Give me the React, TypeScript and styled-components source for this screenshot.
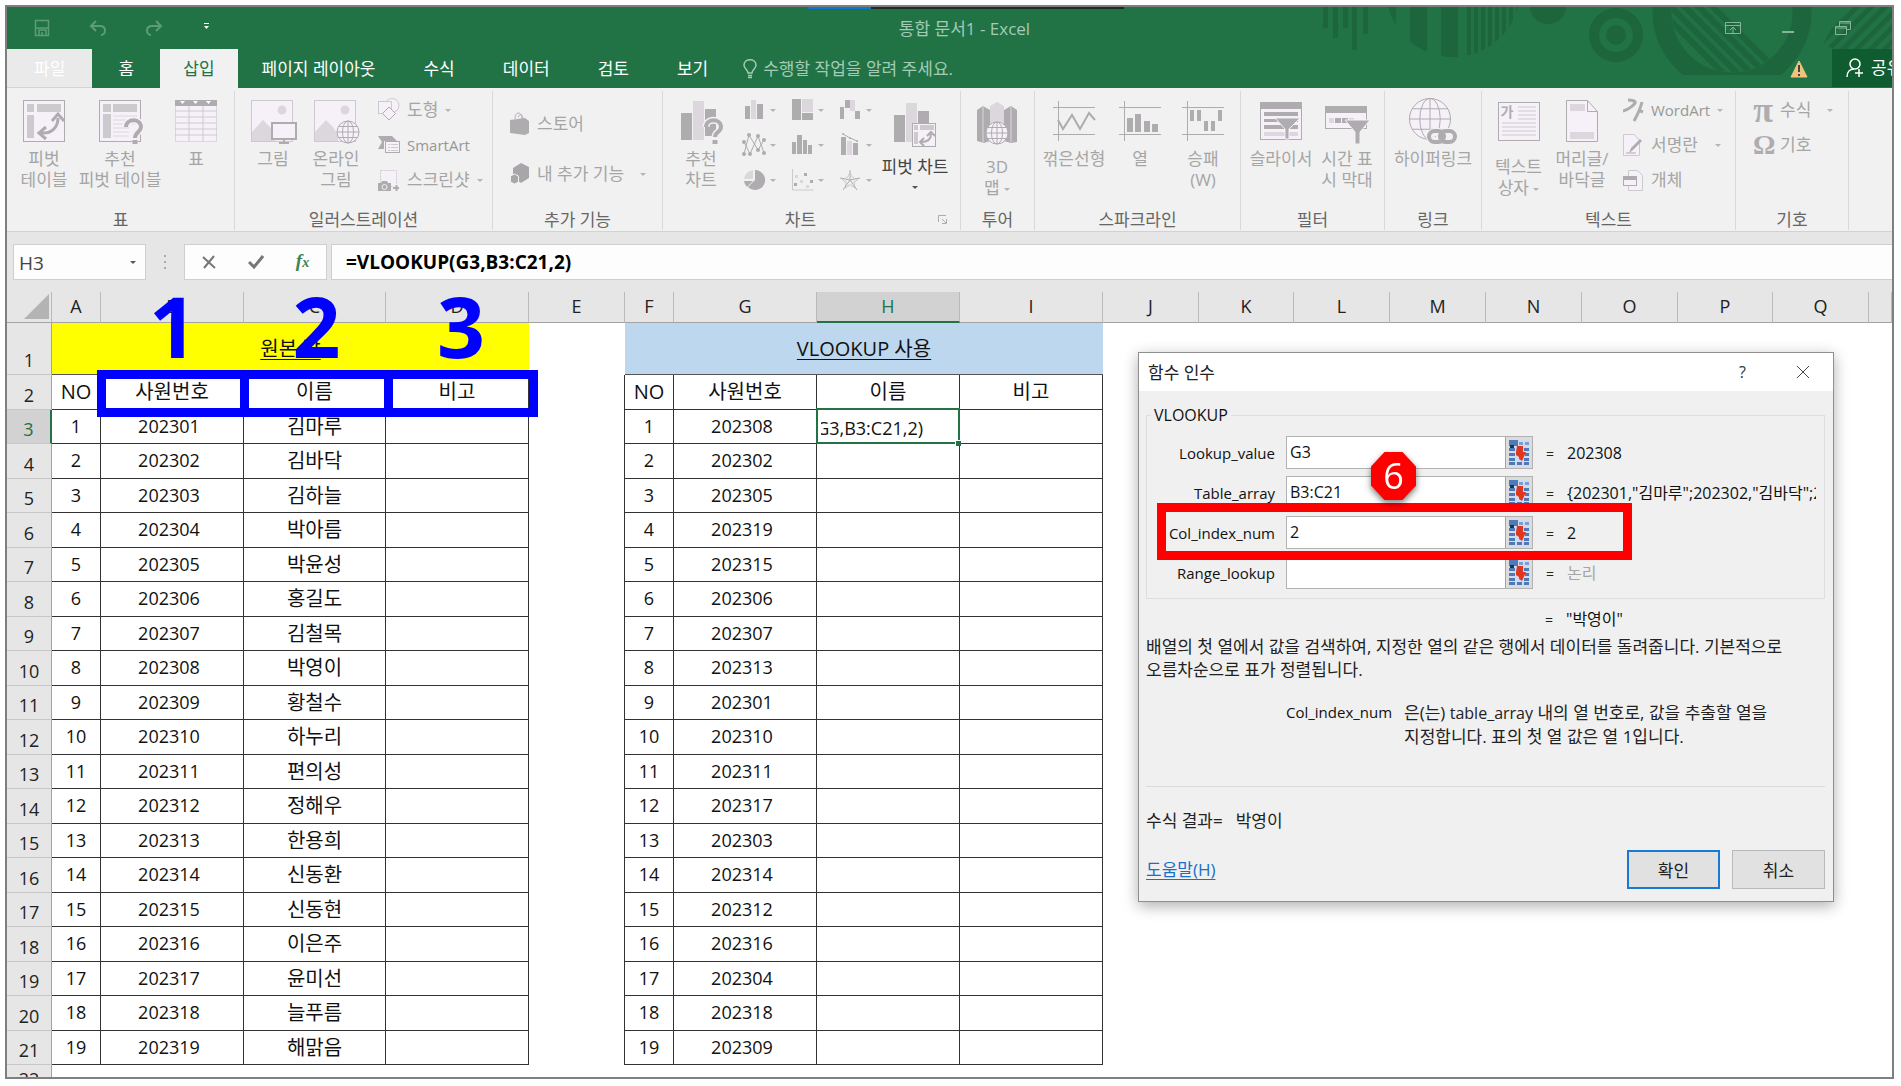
import React from 'react';
import styled, { createGlobalStyle, css } from 'styled-components';

const GREEN = '#217346';
const PATTERN = '#1d653d';
const PALE = '#a3cbb5';
const INK = '#afacb0';
const MID = '#cdcace';
const SOFT = '#dbd7dc';
const PAPER = '#f6f1f8';
const FONT = '"Open Sans", "Noto Sans CJK KR", sans-serif';

const Global = createGlobalStyle`
  *, *::before, *::after { box-sizing: border-box; }
  body { margin: 0; background: #fff; font-family: ${FONT}; color: #111; overflow: hidden; }
  button, input { font-family: inherit; margin: 0; padding: 0; border: 0; border-radius: 0; background: none; color: inherit; outline: none; }
  svg { display: block; flex: none; }
`;

const Page = styled.main`
  padding: 5px 7px 7px 5px;
  height: 100vh;
`;

const Frame = styled.div`
  position: relative;
  display: flex;
  flex-direction: column;
  height: 100%;
  border: 2px solid #7f7f7f;
  background: #e6e6e6;
  overflow: hidden;
`;

/* ---------- title bar and tabs ---------- */

const Header = styled.header`
  position: relative;
  background: ${GREEN};
  height: 81px;
  flex: none;
`;

const Pattern = styled.svg`
  position: absolute;
  top: 0;
  right: 0;
`;

const ScreenStrip = styled.div`
  position: absolute;
  top: 0;
  left: 801px;
  width: 316px;
  height: 2px;
  background: linear-gradient(90deg, #0f77c9 63px, #1d2a26 63px);
`;

const TitleBar = styled.div`
  position: relative;
  display: grid;
  grid-template-columns: 1fr auto 1fr;
  align-items: center;
  height: 42px;
`;

const QuickAccess = styled.div`
  display: flex;
  align-items: center;
  gap: 38px;
  padding-left: 26px;
  color: #5c9c79;
`;

const PlainButton = styled.button`
  display: flex;
  align-items: center;
  justify-content: center;
`;

const DocTitle = styled.h1`
  margin: 0 0 0 30px;
  padding-top: 1px;
  font-size: 17px;
  line-height: 22px;
  font-weight: 400;
  color: ${PALE};
`;

const WindowControls = styled.div`
  display: flex;
  justify-content: flex-end;
  align-items: center;
  gap: 41px;
  color: #86b49a;
  margin-right: -14px;
`;

const TabRow = styled.nav`
  position: relative;
  display: flex;
  height: 39px;
`;

const Tab = styled.button<{ $kind?: 'file' | 'active' }>`
  min-width: 68px;
  padding: 0 24px;
  font-size: 17px;
  line-height: 37px;
  color: #fff;
  ${(p) => p.$kind === 'file' && css`
    padding: 0 27px;
    background: #eaeaea;
    border-bottom: 1px solid #d4d4d4;
    color: #fff;
  `}
  ${(p) => p.$kind === 'active' && css`
    padding: 0 23px;
    background: #f1f1f1;
    color: ${GREEN};
  `}
`;

const TellMe = styled.button`
  display: flex;
  align-items: center;
  gap: 6px;
  margin-left: 11px;
  font-size: 17px;
  line-height: 37px;
  color: ${PALE};
`;

const TabEnd = styled.div`
  display: flex;
  align-items: center;
  gap: 24px;
  margin-left: auto;
`;

const Share = styled.button`
  display: flex;
  align-items: center;
  gap: 8px;
  width: 60px;
  height: 38px;
  padding-left: 14px;
  background: #0e5c2f;
  color: #fff;
  font-size: 17px;
  line-height: 20px;
  white-space: nowrap;
  overflow: hidden;
  align-self: flex-start;
`;

/* ---------- ribbon ---------- */

const Ribbon = styled.section`
  display: flex;
  flex: none;
  height: 144px;
  padding: 3px 0 1px;
  background: #f1f1f1;
  border-bottom: 1px solid #d2d2d2;
`;

const Group = styled.div<{ $w: number }>`
  display: flex;
  flex-direction: column;
  flex: none;
  width: ${(p) => p.$w}px;
  border-right: 1px solid #d8d8d8;
`;

const GroupBody = styled.div<{ $pad?: number }>`
  display: flex;
  flex: 1;
  padding-left: ${(p) => p.$pad ?? 0}px;
`;

const GroupName = styled.div<{ $launcher?: boolean }>`
  display: flex;
  align-items: center;
  height: 20px;
  padding-right: ${(p) => (p.$launcher ? 12 : 0)}px;
  font-size: 17px;
  line-height: 20px;
  color: #666;
  white-space: nowrap;

  & > span { flex: 1; text-align: center; }
`;

const Big = styled.button<{ $w: number; $dark?: boolean; $low?: boolean }>`
  display: flex;
  flex-direction: column;
  align-items: center;
  flex: none;
  width: ${(p) => p.$w}px;
  padding-top: ${(p) => (p.$low ? 10 : 7)}px;
  gap: ${(p) => (p.$low ? 9 : 4)}px;
  font-size: 17px;
  line-height: 21px;
  white-space: nowrap;
  color: ${(p) => (p.$dark ? '#444' : '#a5a5a5')};
`;

const Lines = styled.span`
  display: flex;
  flex-direction: column;
  align-items: center;
`;

const SmallColumn = styled.div<{ $gap?: number; $top?: number }>`
  display: flex;
  flex-direction: column;
  align-items: flex-start;
  gap: ${(p) => p.$gap ?? 11}px;
  padding-top: ${(p) => p.$top ?? 7}px;
`;

const Small = styled.button<{ $latin?: boolean; $gap?: number }>`
  display: flex;
  align-items: center;
  gap: 7px;
  height: 24px;
  font-size: ${(p) => (p.$latin ? 15 : 17)}px;
  line-height: 24px;
  white-space: nowrap;
  color: ${(p) => (p.$latin ? '#979797' : '#a5a5a5')};

  & > i { margin-left: ${(p) => p.$gap ?? 0}px; }
`;

const Caret = styled.i<{ $dark?: boolean }>`
  display: inline-block;
  flex: none;
  width: 0;
  height: 0;
  vertical-align: middle;
  border: 3px solid transparent;
  border-bottom-width: 0;
  border-top-color: ${(p) => (p.$dark ? '#555' : '#b5b5b5')};
`;

const ChartGrid = styled.div`
  display: grid;
  grid-template-columns: repeat(3, 48px);
  grid-auto-rows: 24px;
  row-gap: 11px;
  padding-top: 7px;
  margin-left: 6px;
`;

const ChartKind = styled.button`
  display: flex;
  align-items: center;
  gap: 4px;
`;

/* ---------- formula bar ---------- */

const FormulaBar = styled.section`
  display: flex;
  flex: none;
  align-items: stretch;
  height: 60px;
  padding: 12px 0 12px 6px;
`;

const NameBox = styled.div`
  display: flex;
  align-items: center;
  width: 133px;
  padding: 0 9px 0 5px;
  border: 1px solid #cfcfcf;
  background: #fdfdfd;
  color: #444;

  input { flex: 1; min-width: 0; font-size: 19px; padding-top: 2px; }
`;

const Dots = styled.div`
  display: flex;
  flex-direction: column;
  justify-content: center;
  gap: 4px;
  width: 38px;
  align-items: center;

  span { width: 2px; height: 2px; background: #aaa; }
`;

const FormulaButtons = styled.div`
  display: grid;
  grid-template-columns: repeat(3, 1fr);
  width: 143px;
  border: 1px solid #cfcfcf;
  background: #fdfdfd;
`;

const FormulaInput = styled.input`
  && {
    flex: 1;
    min-width: 0;
    margin-left: 4px;
    padding-left: 14px;
    border: 1px solid #cfcfcf;
    border-right: 0;
    background: #fdfdfd;
    font-size: 19px;
    font-weight: 700;
    color: #000;
  }
`;

/* ---------- sheet ---------- */

const Sheet = styled.section`
  position: relative;
  flex: 1;
  min-height: 0;
  overflow: hidden;
  background: #fff;
`;

const Grid = styled.table`
  width: 100%;
  table-layout: fixed;
  border-collapse: separate;
  border-spacing: 0;
  font-size: 18px;
  line-height: 24px;

  th, td { padding: 0 0 2px; font-weight: 400; text-align: center; overflow: hidden; white-space: nowrap; }
`;

const ColHead = styled.th<{ $on?: boolean }>`
  height: 31px;
  background: ${(p) => (p.$on ? '#d2d2d2' : '#e6e6e6')};
  color: ${(p) => (p.$on ? GREEN : '#222')};
  border-right: 1px solid #bababa;
  border-bottom: ${(p) => (p.$on ? `2px solid ${GREEN}` : '1px solid #a3a3a3')};
`;

const Corner = styled(ColHead)`
  svg { margin-left: 17px; }
`;

const Row = styled.tr<{ $h: number }>`
  height: ${(p) => p.$h}px;
`;

const RowHead = styled.th<{ $on?: boolean }>`
  vertical-align: bottom;
  background: ${(p) => (p.$on ? '#d2d2d2' : '#e6e6e6')};
  color: ${(p) => (p.$on ? GREEN : '#222')};
  border-right: ${(p) => (p.$on ? `2px solid ${GREEN}` : '1px solid #a3a3a3')};
  border-bottom: 1px solid #c8c8c8;
`;

const Cell = styled.td<{ $text?: boolean; $number?: boolean }>`
  && { padding: 0 ${(p) => (p.$number ? 6 : 0)}px ${(p) => (p.$text ? 0 : 2)}px 0; }
  font-size: ${(p) => (p.$text ? 20 : 18)}px;
  border-right: 1px solid #333;
  border-bottom: 1px solid #333;
`;

const GapCell = styled.td<{ $edge?: boolean }>`
  border-right: ${(p) => (p.$edge ? '1px solid #333' : '0')};
`;

const Banner = styled.td<{ $bg: string }>`
  && { padding: 0; }
  background: ${(p) => p.$bg};
  border-bottom: 1px solid #555;
  font-size: 20px;
  text-decoration: underline;
  text-underline-offset: 3px;
  text-decoration-thickness: 1px;
`;

const EditingCell = styled.td`
  && { overflow: visible; }
  position: relative;
  border-right: 1px solid #333;
  border-bottom: 1px solid #333;

  &::before {
    content: '';
    position: absolute;
    inset: -2px -1px -1px -1px;
    border: 2px solid ${GREEN};
  }

  &::after {
    content: '';
    position: absolute;
    right: -2px;
    bottom: -3px;
    width: 6px;
    height: 6px;
    background: ${GREEN};
    border: 1px solid #fff;
    border-width: 1px 0 0 1px;
  }
`;

const EditingText = styled.div`
  display: flex;
  justify-content: flex-end;
  width: 102px;
  margin-left: 4px;
  padding-top: 4px;
  overflow: hidden;
`;

const HeaderMarks = styled.div`
  position: absolute;
  top: 78px;
  left: 90px;
  display: grid;
  grid-template-columns: 152px 144px 145px;
  height: 47px;
`;

const HeaderMark = styled.div`
  position: relative;
  display: flex;
  justify-content: center;
  border: 9px solid #00f;

  & + & { border-left: 0; }
`;

const MarkNumber = styled.strong`
  position: absolute;
  bottom: 40px;
  font-size: 84px;
  line-height: 84px;
  font-weight: 700;
  color: #00f;
`;

/* ---------- dialog ---------- */

const Dialog = styled.section`
  position: absolute;
  top: 345px;
  left: 1131px;
  width: 696px;
  border: 1px solid #8f8f8f;
  background: #f0f0f0;
  box-shadow: 0 4px 14px rgba(0, 0, 0, 0.32);
  font-size: 17px;
  line-height: 23px;
  color: #222;
`;

const DialogTitle = styled.div`
  display: flex;
  align-items: center;
  height: 38px;
  padding: 0 23px 0 9px;
  background: #fff;

  h2 { flex: 1; margin: 0; font-size: 17px; font-weight: 400; }
`;

const HelpMark = styled.button`
  margin-right: 50px;
  font-size: 16px;
  color: #333;
`;

const DialogBody = styled.div`
  padding: 13px 8px 12px 7px;
`;

const ArgBox = styled.fieldset`
  margin: 0;
  padding: 10px 8px 9px 0;
  min-width: 0;
  border: 1px solid #dedede;

  legend { margin-left: 4px; padding: 0 3px; font-size: 16px; line-height: 22px; color: #111; }
`;

const ArgRow = styled.div`
  display: grid;
  grid-template-columns: 139px 247px 34px 1fr;
  align-items: center;
  height: 33px;

  label { padding: 2px 11px 0 0; text-align: right; font-size: 15px; color: #111; }
`;

const ArgField = styled.div`
  display: flex;
  height: 33px;
  border: 1px solid #b2b2b2;
  background: #fff;

  input { flex: 1; min-width: 0; padding: 0 0 2px 3px; font-size: 16px; color: #111; }
`;

const ArgFields = styled.div`
  display: flex;
  flex-direction: column;
  gap: 7px;
`;

const RefButton = styled.button`
  && {
    display: flex;
    align-items: center;
    justify-content: center;
    width: 27px;
    background: #dcdcdc;
    border-left: 1px solid #a5a5a5;
  }
`;

const Equals = styled.span`
  padding: 2px 0 0 13px;
  font-size: 14px;
`;

const ArgValue = styled.output<{ $faint?: boolean }>`
  padding-top: 2px;
  overflow: hidden;
  white-space: nowrap;
  font-size: 16px;
  color: ${(p) => (p.$faint ? '#a5a5a5' : '#111')};
`;

const ResultRow = styled(ArgRow)`
  height: 23px;
  margin: 7px 0 6px;

  & > span:first-child { grid-column: 3; }
`;

const Text = styled.p`
  margin: 0;

  small { font-size: 16px; }
`;

const ArgHelp = styled.div`
  display: grid;
  grid-template-columns: 118px 1fr;
  margin-top: 20px;
  padding-left: 140px;
  height: 85px;

  b { font-weight: 400; font-size: 15px; color: #111; }
`;

const Result = styled.div`
  display: flex;
  gap: 13px;
  padding: 22px 0 18px;
  border-top: 1px solid #dadada;
`;

const DialogFoot = styled.div`
  display: flex;
  align-items: center;
  gap: 12px;

  a { margin-right: auto; color: #1a6fc9; text-underline-offset: 3px; }
`;

const DialogButton = styled.button<{ $primary?: boolean }>`
  && {
    width: 93px;
    height: 39px;
    font-size: 17px;
    background: #e1e1e1;
    border: ${(p) => (p.$primary ? '2px solid #1979d6' : '1px solid #b9b9b9')};
  }
`;

const RedBox = styled.div`
  position: absolute;
  top: 150px;
  left: 18px;
  width: 475px;
  height: 57px;
  border: 9px solid #f00;
`;

const Step = styled.div`
  position: absolute;
  top: 99px;
  left: 232px;
  filter: drop-shadow(0 3px 3px rgba(0, 0, 0, 0.5));

  span {
    display: flex;
    align-items: center;
    justify-content: center;
    width: 45px;
    height: 48px;
    clip-path: polygon(30% 0, 70% 0, 100% 30%, 100% 70%, 70% 100%, 30% 100%, 0 70%, 0 30%);
    background: #f00;
    color: #fff;
    font-size: 36px;
    line-height: 48px;
  }
`;

/* ---------- drawings ---------- */

type SvgProps = { w?: number; h?: number; children: React.ReactNode };
const Svg = ({ w = 46, h = 46, children }: SvgProps) => (
  <svg width={w} height={h} viewBox={`0 0 ${w} ${h}`} fill="none" aria-hidden="true">{children}</svg>
);

const PivotIcon = () => (
  <Svg>
    <rect x="2.5" y="2.5" width="41" height="41" fill={PAPER} stroke={INK} />
    <path d="M6 6h7v8H6zM16 6h24v8H16zM6 17h7v23H6z" fill={MID} />
    <path d="M20 35c10 1 17-5 17-15" stroke={INK} strokeWidth="3" />
    <path d="M31 23l6-7 6 7M25 29l-7 6 7 6" stroke={INK} strokeWidth="3" />
  </Svg>
);

const RecommendedPivotIcon = () => (
  <Svg w={48}>
    <rect x="3.5" y="2.5" width="41" height="41" fill={PAPER} stroke={INK} />
    <path d="M7 6h8v8H7zM17 6h24v8H17zM7 16h8v24H7z" fill={MID} />
    <path d="M17 18h24M17 22h24M17 26h24M17 30h16M17 34h16M17 38h16" stroke={SOFT} />
    <path d="M30 29c0-9 15-9 15 0 0 5-6 5-6 11M36.5 44h5" stroke={PAPER} strokeWidth="7" />
    <path d="M30 29c0-9 15-9 15 0 0 5-6 5-6 11M36.5 44h5" stroke={INK} strokeWidth="4" />
  </Svg>
);

const TableIcon = () => (
  <Svg>
    <rect x="2.5" y="2.5" width="41" height="41" fill={PAPER} stroke={SOFT} />
    <path d="M2 2h42v6H2z" fill={INK} />
    <path d="M7 3h5l-2.5 3zM20 3h5l-2.5 3zM33 3h5l-2.5 3z" fill="#fff" />
    <path d="M2 13h42M2 19h42M2 25h42M2 31h42M2 37h42M16 8v35M30 8v35" stroke={MID} />
  </Svg>
);

const PictureBase = () => (
  <>
    <rect x="2.5" y="2.5" width="41" height="41" fill={PAPER} stroke={MID} />
    <circle cx="33" cy="12" r="4.5" fill={SOFT} />
    <path d="M3 34l11-12 7 7 5 8v6H3z" fill={SOFT} />
  </>
);

const PictureIcon = () => (
  <Svg w={49} h={46}>
    <PictureBase />
    <rect x="23" y="25" width="24" height="16" fill={PAPER} stroke={INK} strokeWidth="2" />
    <path d="M35 42v3M30 45h10" stroke={INK} strokeWidth="2" />
  </Svg>
);

const Globe = ({ cx, cy, r }: { cx: number; cy: number; r: number }) => (
  <g stroke={INK}>
    <circle cx={cx} cy={cy} r={r} fill={PAPER} />
    <ellipse cx={cx} cy={cy} rx={r / 2} ry={r} />
    <path d={`M${cx - r} ${cy}h${2 * r}M${cx} ${cy - r}v${2 * r}M${cx - r * 0.85} ${cy - r / 2}h${r * 1.7}M${cx - r * 0.85} ${cy + r / 2}h${r * 1.7}`} />
  </g>
);

const OnlinePictureIcon = () => (
  <Svg w={49} h={46}>
    <PictureBase />
    <Globe cx={36} cy={34} r={11} />
  </Svg>
);

const ShapesIcon = () => (
  <Svg w={22} h={24}>
    <circle cx="14" cy="7.5" r="7" fill={PAPER} stroke={MID} />
    <rect x="0.5" y="3.5" width="13" height="12" fill={PAPER} stroke={MID} />
    <path d="M11 9l6.5 6.5L11 22l-6.500-6.500z" fill={PAPER} stroke={INK} />
  </Svg>
);

const SmartArtIcon = () => (
  <Svg w={22} h={24}>
    <path d="M0 3h14l5 5H6v8H0l4-7z" fill={INK} />
    <rect x="7.5" y="8.5" width="14" height="11" fill={PAPER} stroke={INK} />
    <path d="M10 11.5h2M10 14.500h2M10 17.500h2M13 11.500h7M13 14.500h7M13 17.500h7" stroke={MID} />
  </Svg>
);

const ScreenshotIcon = () => (
  <Svg w={22} h={24}>
    <rect x="2.5" y="2.5" width="16" height="16" fill={PAPER} stroke={MID} strokeDasharray="2 1" />
    <path d="M0 15h3l1-2h5l1 2h3v8H0z" fill={INK} />
    <circle cx="6.500" cy="19" r="2.5" fill={INK} stroke="#f1f1f1" />
    <path d="M18 16v7M15 19.500h7" stroke="#f1f1f1" strokeWidth="4" />
    <path d="M18.500 17v6M15 20h6" stroke={INK} strokeWidth="2" />
  </Svg>
);

const StoreIcon = () => (
  <Svg w={20} h={24}>
    <path d="M5 7c0-8 7-8 7 0M8 5c2-4 5-2 5 2" stroke={INK} />
    <path d="M0 8l15-2 4 3v12l-4 2-15-2z" fill={INK} />
  </Svg>
);

const AddinsIcon = () => (
  <Svg w={20} h={24}>
    <path d="M11 1l8 4v11l-8 5-8-5V6z" fill="#a9a6aa" />
    <path d="M4.500 12l4 2v6l-4 2-4-2v-6z" fill="#a9a6aa" stroke="#f1f1f1" />
  </Svg>
);

const RecommendedChartIcon = () => (
  <Svg>
    <path d="M3 15h11v27H3zM27 11h11v27H27z" fill={INK} />
    <path d="M15 3h11v39H15z" fill={SOFT} />
    <path d="M28 29c0-9 15-9 15 0 0 5-6 5-6 10M34 44h6" stroke="#f1f1f1" strokeWidth="7" />
    <path d="M28 29c0-9 15-9 15 0 0 5-6 5-6 10M34.5 44h5" stroke={INK} strokeWidth="4" />
  </Svg>
);

const PivotChartIcon = () => (
  <Svg>
    <path d="M2 14h11v27H2zM26 10h11v12H26z" fill={INK} />
    <path d="M14 2h11v39H14z" fill={SOFT} />
    <rect x="20.5" y="22.5" width="23" height="23" fill={PAPER} stroke={INK} />
    <path d="M22 24h4v5h-4zM28 24h14v5H28zM22 31h4v12h-4z" fill={MID} />
    <path d="M29 41c7 0 10-3 10-8M35 35l4-4 4 4M32 37l-4 4 4 4" stroke={INK} strokeWidth="2" />
  </Svg>
);

const MapIcon = () => (
  <Svg w={44} h={46}>
    <path d="M2 9l6-4 7 4v31l-6 2-7-2zM29 9l7-4 6 4v32l-6 1-7-2z" fill={INK} />
    <path d="M15 5l7-4 7 4v36H15z" fill={SOFT} />
    <path d="M8 6v36M36 6v35" stroke={SOFT} />
    <Globe cx={22} cy={32} r={11} />
  </Svg>
);

const dots = (points: number[][], r: number) => points.map(([x, y]) => <circle key={`${x}-${y}`} cx={x} cy={y} r={r} fill={INK} />);

const chartKinds: React.ReactNode[] = [
  <><path d="M5 8h5v13H5zM17 6h6v15h-6z" fill={INK} /><path d="M11 2h5v19h-5z" fill={SOFT} /></>,
  <><path d="M4 1h9v21H4zM14 15h11v7H14z" fill={INK} /><path d="M14 1h11v13H14z" fill={SOFT} /></>,
  <><path d="M4 9h4v12H4zM9 2h5v8H9zM19 13h5v8h-5z" fill={INK} /><path d="M14 2h5v11h-5z" fill={SOFT} /></>,
  <>
    <path d="M4 21L9 2l9 15 6-10M4 9l6 12 8-18 6 17" stroke={INK} />
    {dots([[4, 9], [9, 2], [18, 3], [24, 7], [4, 21], [10, 21], [18, 17], [24, 20]], 2)}
  </>,
  <path d="M4 9h4v12H4zM9 2h5v19H9zM15 7h4v14h-4zM20 12h4v9h-4z" fill={INK} />,
  <>
    <path d="M5 4h5v18H5zM17 10h5v12h-5z" fill={INK} />
    <path d="M11 8h5v14h-5z" fill={SOFT} />
    <path d="M7 1l7 4 7 3" stroke={INK} />
    {dots([[7, 1], [14, 5], [21, 8]], 1)}
  </>,
  <>
    <path d="M15 2a10 10 0 1 1-7 17l7-7z" fill={INK} />
    <path d="M13 2v9H4a10 10 0 0 1 9-9z" fill={SOFT} />
    <path d="M4 13h9l-6 6a10 10 0 0 1-3-6z" fill={INK} />
  </>,
  <>
    <path d="M4.5 1v21h21" stroke={MID} />
    <path d="M6 15h3v3H6zM16 5h3v3h-3zM22 12h3v3h-3z" fill={INK} />
    <path d="M7 7h3v3H7zM12 12h3v3h-3zM18 17h3v3h-3z" fill={SOFT} />
  </>,
  <>
    <path d="M14 5l3 5 5 1-4 4 1 5-5-3-5 3 1-5-4-4 5-1z" stroke={MID} />
    <path d="M14 2v10L24 10M14 12l7 10M14 12L7 22M14 12L4 10" stroke={INK} />
    <path d="M14 7l5 4-2 6h-6l-2-6z" stroke={SOFT} />
  </>,
];

const SparkAxes = () => <path d="M6.5 1v40M1 7.5h42M1 34.5h42" stroke={INK} />;

const LineSparkIcon = () => (
  <Svg w={44} h={42}>
    <SparkAxes />
    <path d="M6 20l5 9 9-14 8 14 9-16 6 7" stroke={INK} strokeWidth="2" />
  </Svg>
);
const ColumnSparkIcon = () => (
  <Svg w={44} h={42}>
    <SparkAxes />
    <path d="M9 18h6v14H9zM17 14h6v18h-6zM26 21h6v11h-6zM34 24h6v8h-6z" fill={INK} />
  </Svg>
);
const WinLossIcon = () => (
  <Svg w={44} h={42}>
    <SparkAxes />
    <path d="M9 10h4v11H9zM16 10h4v11h-4zM23 21h4v10h-4zM30 21h4v10h-4zM37 10h4v11h-4z" fill={INK} />
  </Svg>
);

const SlicerIcon = () => (
  <Svg>
    <rect x="2.5" y="5.5" width="41" height="36" fill={PAPER} stroke={INK} />
    <path d="M2 4h42v7H2zM6 14h34v4H6zM6 21h34v3H6zM6 27h34v4H6z" fill={INK} />
    <path d="M6 34h34v4H6z" fill={SOFT} />
    <path d="M17 20h25L31 31v10h-4V31z" fill={INK} stroke={PAPER} />
  </Svg>
);

const TimelineIcon = () => (
  <Svg w={48}>
    <rect x="2.5" y="8.5" width="41" height="22" fill={PAPER} stroke={INK} />
    <path d="M2 8h42v7H2zM12 20h6v5h-6zM19 20h6v5h-6z" fill={INK} />
    <path d="M6 20h5v5H6zM26 20h5v5h-5z" fill={SOFT} />
    <path d="M22 22h25L37 34v12h-5V34z" fill={INK} stroke={PAPER} />
  </Svg>
);

const LinkIcon = () => (
  <Svg w={50} h={48}>
    <Globe cx={22} cy={22} r={20.5} />
    <g stroke="#f1f1f1" strokeWidth="8"><rect x="22" y="35" width="14" height="9" rx="4.5" /><rect x="32" y="35" width="14" height="9" rx="4.5" /></g>
    <g stroke={INK} strokeWidth="4"><rect x="21" y="34" width="15" height="11" rx="5.5" /><rect x="32" y="34" width="15" height="11" rx="5.5" /></g>
  </Svg>
);

const TextBoxGlyph = styled.span`
  display: grid;
  width: 42px;
  height: 46px;

  & > * { grid-area: 1 / 1; }
  & > span { font-size: 14px; line-height: 14px; font-weight: 700; padding: 4px 0 0 3px; text-align: left; color: ${INK}; }
`;
const TextBoxIcon = () => (
  <TextBoxGlyph>
    <Svg w={42} h={42}>
      <rect x="0.5" y="1.5" width="41" height="38" fill={PAPER} stroke={INK} />
      <path d="M20 6h18M20 10h18M20 14h18M20 18h18M4 22h34M4 26h34M4 30h34M4 34h34" stroke={MID} />
    </Svg>
    <span>가</span>
  </TextBoxGlyph>
);

const HeaderFooterIcon = () => (
  <Svg w={34} h={46}>
    <path d="M1.5 2.5h21l10 11v30h-31z" fill={PAPER} stroke={INK} />
    <path d="M22.5 2.5v11h10" stroke={INK} />
    <path d="M5 6h15v7H5zM5 34h24v7H5z" fill={SOFT} />
  </Svg>
);

const WordArtIcon = () => (
  <Svg w={21} h={24}>
    <path d="M5 2c4 0 8 1 7 3S5 12 0 13M19 4c-2 8-4 12-8 19M15 12l5 2" stroke={INK} strokeWidth="3" />
  </Svg>
);
const SignatureIcon = () => (
  <Svg w={21} h={24}>
    <path d="M0.5 1.5h11l5 6v15h-16z" fill={PAPER} stroke={MID} />
    <path d="M19 8l-9 9-4 3 2-5 9-9z" fill={INK} />
    <path d="M3 20h10" stroke={INK} />
  </Svg>
);
const ObjectIcon = () => (
  <Svg w={21} h={24}>
    <path d="M5.5 2.5h9l5 5v15h-14z" fill={PAPER} stroke={MID} />
    <rect x="0.5" y="8.5" width="13" height="9" fill={PAPER} stroke={INK} />
    <path d="M0 8h14v4H0z" fill={INK} />
  </Svg>
);

const Symbol = styled.span<{ $tall?: boolean }>`
  width: 20px;
  font-family: "Liberation Serif", serif;
  font-size: ${(p) => (p.$tall ? 36 : 28)}px;
  font-weight: 700;
  line-height: 24px;
  color: ${INK};
`;

const RefIcon = () => (
  <Svg w={20} h={25}>
    <path d="M0 0h20v25H0z" fill="#cfdcef" />
    <path d="M0 0h9v6H0zM0 8h6v3H0zM0 13h6v3H0zM0 18h6v3H0zM0 22h6v3H0zM8 22h5v3H8zM15 22h5v3h-5zM15 18h5v3h-5zM16 13h4v3h-4zM15 8h5v3h-5z" fill="#4f79b8" />
    <path d="M10 2h4v3h-4zM16 2h4v3h-4z" fill="#7d9fd0" />
    <path d="M1 5h4v3H1z" fill="#1d3150" />
    <path d="M8 6h6v6h3l-4 9-3-2V17l-3-2V12z" fill="#e0361f" />
  </Svg>
);

const TitlePattern = () => (
  <Pattern width="631" height="81" viewBox="1261 7 631 81" fill={PATTERN} aria-hidden="true">
    <defs>
      <clipPath id="stripedDisc"><circle cx="1453" cy="-10" r="67" /></clipPath>
      <clipPath id="ringHole"><circle cx="1732" cy="12" r="60" /></clipPath>
      <clipPath id="ringCrop"><path d="M1640 7h200v68h-200z" /></clipPath>
      <clipPath id="cornerStripes"><path d="M1838 7h54v42h-60l-8-6 10-20z" /></clipPath>
    </defs>
    <path d="M1323 7h5v21h-5zM1333 7h5v31h-5zM1343 7h5v21h-5zM1352 7h5v43h-5zM1363 7h5v27h-5z" />
    <g clipPath="url(#stripedDisc)">
      <path d="M1385 0h11v60h-11zM1410 0h17v60h-17zM1441 0h17v60h-17z" />
      {[0, 1, 2, 3, 4, 5, 6, 7].map((i) => <rect key={i} x={1467 + i * 7} y="0" width="4" height="60" />)}
    </g>
    <circle cx="1548" cy="6" r="18" />
    <circle cx="1616" cy="35" r="22" fill="none" stroke={PATTERN} strokeWidth="10" />
    <circle cx="1616" cy="35" r="10" />
    <g clipPath="url(#ringCrop)">
      <circle cx="1732" cy="12" r="70" fill="none" stroke={PATTERN} strokeWidth="19" />
      <g clipPath="url(#ringHole)" stroke={PATTERN} strokeWidth="6">
        {[0, 1, 2, 3, 4].map((i) => <path key={i} d={`M${1650 + i * 14} 0l85 85`} />)}
      </g>
    </g>
    <g clipPath="url(#cornerStripes)" stroke={PATTERN} strokeWidth="5">
      {[0, 1, 2, 3, 4, 5].map((i) => <path key={i} d={`M${1812 + i * 14} 52l55-55`} />)}
    </g>
  </Pattern>
);

/* ---------- data ---------- */

const columns = 'ABCDEFGHIJKLMNOPQ'.split('');
const widths = [45, 49, 143, 142, 143, 96, 49, 143, 143, 143, 96, 95, 96, 96, 96, 96, 95, 96];
const names = ['김마루', '김바닥', '김하늘', '박아름', '박윤성', '홍길도', '김철목', '박영이', '황철수', '하누리', '편의성', '정해우', '한용희', '신동환', '신동현', '이은주', '윤미선', '늘푸름', '해맑음'];
const lookups = [202308, 202302, 202305, 202319, 202315, 202306, 202307, 202313, 202301, 202310, 202311, 202317, 202303, 202314, 202312, 202316, 202304, 202318, 202309];
const headings = ['NO', '사원번호', '이름', '비고'];

const args = [
  { id: 'Lookup_value', value: 'G3', result: '202308' },
  { id: 'Table_array', value: 'B3:C21', result: '{202301,"김마루";202302,"김바닥";202303' },
  { id: 'Col_index_num', value: '2', result: '2' },
  { id: 'Range_lookup', value: '', result: '논리', faint: true },
];

/* ---------- page ---------- */

const IconSlot = styled.span`
  padding-left: 10px;
`;

const Lower = styled.span`
  display: flex;
  align-items: center;
  height: 21px;
`;

const Tall = styled.span`
  display: flex;
  align-items: center;
  height: 46px;
`;

const Fx = styled.em`
  font-family: "Liberation Serif", serif;
  font-size: 19px;
  line-height: 20px;
  font-weight: 700;
  color: #3d8259;

  small { font-size: 14px; }
`;

const AppHeader = () => (
  <Header>
    <TitlePattern />
    <ScreenStrip />
    <TitleBar>
      <QuickAccess>
        <PlainButton aria-label="저장">
          <Svg w={18} h={18}><path d="M2.5 1.5h13v15h-13zM3 9h12M6 16v-5h7v5M9 13v3" stroke="currentColor" strokeWidth="1.5" /></Svg>
        </PlainButton>
        <PlainButton aria-label="실행 취소">
          <Svg w={18} h={18}><path d="M7 2L2 7l5 5M2 7h9c7 0 6 9 1 9" stroke="currentColor" strokeWidth="2" /></Svg>
        </PlainButton>
        <PlainButton aria-label="다시 실행">
          <Svg w={18} h={18}><path d="M11 2l5 5-5 5M16 7H7c-7 0-6 9-1 9" stroke="currentColor" strokeWidth="2" /></Svg>
        </PlainButton>
        <PlainButton aria-label="빠른 실행 도구 모음 사용자 지정">
          <Svg w={12} h={12}><path d="M3 1h5v1H3zM3 4h5L5.5 7z" fill="#fff" /></Svg>
        </PlainButton>
      </QuickAccess>
      <DocTitle>통합 문서1 - Excel</DocTitle>
      <WindowControls>
        <PlainButton aria-label="리본 메뉴 표시 옵션">
          <Svg w={16} h={14}><path d="M.5 1.5h15v11H.5zM.5 4.5h15M8 12V6M5 9l3-3 3 3" stroke="currentColor" /></Svg>
        </PlainButton>
        <PlainButton aria-label="최소화">
          <Svg w={12} h={14}><path d="M0 11h12" stroke="currentColor" strokeWidth="2" /></Svg>
        </PlainButton>
        <PlainButton aria-label="이전 크기로">
          <Svg w={16} h={16}><path d="M.5 6.5h11v8H.5zM.5 8h11M4.5 6V1.5h11v8H12M4 3h11" stroke="currentColor" /></Svg>
        </PlainButton>
        <PlainButton aria-label="닫기">
          <Svg w={14} h={14}><path d="M1 1l12 12M13 1L1 13" stroke="currentColor" /></Svg>
        </PlainButton>
      </WindowControls>
    </TitleBar>
    <TabRow>
      <Tab $kind="file">파일</Tab>
      <Tab>홈</Tab>
      <Tab $kind="active">삽입</Tab>
      {['페이지 레이아웃', '수식', '데이터', '검토', '보기'].map((t) => <Tab key={t}>{t}</Tab>)}
      <TellMe>
        <Svg w={14} h={20}><path d="M5 14c0-3-4-4-4-8 0-7 12-7 12 0 0 4-4 5-4 8zM5 16.5h4M5 18.5h4" stroke="currentColor" strokeWidth="1.5" /></Svg>
        수행할 작업을 알려 주세요.
      </TellMe>
      <TabEnd>
        <Svg w={18} h={18}><path d="M9 1l8 16H1z" fill="#f0c27d" stroke="#f0c27d" /><path d="M9 5v7M9 14v2" stroke="#444" strokeWidth="2" /></Svg>
        <Share>
          <Svg w={17} h={20}><circle cx="9" cy="6" r="5" stroke="#fff" strokeWidth="1.5" /><path d="M1 19c0-5 3-8 7-8M13 11v8M9 15h8" stroke="#fff" strokeWidth="1.5" /></Svg>
          공유
        </Share>
      </TabEnd>
    </TabRow>
  </Header>
);

const AppRibbon = () => (
  <Ribbon>
    <Group $w={228}>
      <GroupBody>
        <Big $w={74}><PivotIcon /><Lines><span>피벗</span><span>테이블</span></Lines></Big>
        <Big $w={78}><RecommendedPivotIcon /><Lines><span>추천</span><span>피벗 테이블</span></Lines></Big>
        <Big $w={74}><TableIcon /><Lines><span>표</span></Lines></Big>
      </GroupBody>
      <GroupName><span>표</span></GroupName>
    </Group>
    <Group $w={258}>
      <GroupBody $pad={7}>
        <Big $w={62}><PictureIcon /><Lines><span>그림</span></Lines></Big>
        <Big $w={64}><OnlinePictureIcon /><Lines><span>온라인</span><span>그림</span></Lines></Big>
        <SmallColumn>
          <Small><IconSlot><ShapesIcon /></IconSlot>도형<Caret /></Small>
          <Small $latin><IconSlot><SmartArtIcon /></IconSlot>SmartArt</Small>
          <Small><IconSlot><ScreenshotIcon /></IconSlot>스크린샷<Caret /></Small>
        </SmallColumn>
      </GroupBody>
      <GroupName><span>일러스트레이션</span></GroupName>
    </Group>
    <Group $w={170}>
      <GroupBody $pad={17}>
        <SmallColumn $top={21} $gap={26}>
          <Small><StoreIcon />스토어</Small>
          <Small $gap={9}><AddinsIcon />내 추가 기능<Caret /></Small>
        </SmallColumn>
      </GroupBody>
      <GroupName><span>추가 기능</span></GroupName>
    </Group>
    <Group $w={298}>
      <GroupBody $pad={5}>
        <Big $w={66}><RecommendedChartIcon /><Lines><span>추천</span><span>차트</span></Lines></Big>
        <ChartGrid>
          {chartKinds.map((icon, i) => (
            <ChartKind key={i} aria-label={`차트 종류 ${i + 1}`}><Svg w={26} h={24}>{icon}</Svg><Caret /></ChartKind>
          ))}
        </ChartGrid>
        <Big $w={62} $dark $low><PivotChartIcon /><Lines><span>피벗 차트</span><Lower><Caret $dark /></Lower></Lines></Big>
      </GroupBody>
      <GroupName $launcher>
        <span>차트</span>
        <Svg w={10} h={10}><path d="M.5 7V.5H8M4 4l4 4M8.5 4v4.5H4" stroke={INK} /></Svg>
      </GroupName>
    </Group>
    <Group $w={74}>
      <GroupBody>
        <Big $w={72} $low><MapIcon /><Lines><span>3D</span><span>맵 <Caret /></span></Lines></Big>
      </GroupBody>
      <GroupName><span>투어</span></GroupName>
    </Group>
    <Group $w={206}>
      <GroupBody $pad={6}>
        <Big $w={66}><Tall><LineSparkIcon /></Tall><Lines><span>꺾은선형</span></Lines></Big>
        <Big $w={66}><Tall><ColumnSparkIcon /></Tall><Lines><span>열</span></Lines></Big>
        <Big $w={60}><Tall><WinLossIcon /></Tall><Lines><span>승패</span><span>(W)</span></Lines></Big>
      </GroupBody>
      <GroupName><span>스파크라인</span></GroupName>
    </Group>
    <Group $w={144}>
      <GroupBody $pad={6}>
        <Big $w={68}><SlicerIcon /><Lines><span>슬라이서</span></Lines></Big>
        <Big $w={64}><TimelineIcon /><Lines><span>시간 표</span><span>시 막대</span></Lines></Big>
      </GroupBody>
      <GroupName><span>필터</span></GroupName>
    </Group>
    <Group $w={97}>
      <GroupBody>
        <Big $w={96}><Tall><LinkIcon /></Tall><Lines><span>하이퍼링크</span></Lines></Big>
      </GroupBody>
      <GroupName><span>링크</span></GroupName>
    </Group>
    <Group $w={254}>
      <GroupBody $pad={4}>
        <Big $w={65} $low><TextBoxIcon /><Lines><span>텍스트</span><span>상자 <Caret /></span></Lines></Big>
        <Big $w={62}><HeaderFooterIcon /><Lines><span>머리글/</span><span>바닥글</span></Lines></Big>
        <SmallColumn>
          <Small $latin><IconSlot><WordArtIcon /></IconSlot>WordArt<Caret /></Small>
          <Small $gap={10}><IconSlot><SignatureIcon /></IconSlot>서명란<Caret /></Small>
          <Small><IconSlot><ObjectIcon /></IconSlot>개체</Small>
        </SmallColumn>
      </GroupBody>
      <GroupName><span>텍스트</span></GroupName>
    </Group>
    <Group $w={113}>
      <GroupBody $pad={17}>
        <SmallColumn>
          <Small $gap={9}><Symbol $tall>π</Symbol>수식<Caret /></Small>
          <Small><Symbol>Ω</Symbol>기호</Small>
        </SmallColumn>
      </GroupBody>
      <GroupName><span>기호</span></GroupName>
    </Group>
  </Ribbon>
);

const AppFormulaBar = () => (
  <FormulaBar>
    <NameBox><input aria-label="이름 상자" defaultValue="H3" /><Caret $dark /></NameBox>
    <Dots><span /><span /><span /></Dots>
    <FormulaButtons>
      <PlainButton aria-label="취소"><Svg w={14} h={14}><path d="M1 2l12 11M12 1L2 13" stroke="#777" strokeWidth="2" /></Svg></PlainButton>
      <PlainButton aria-label="입력"><Svg w={16} h={14}><path d="M1 7l5 5L15 1" stroke="#777" strokeWidth="3" /></Svg></PlainButton>
      <PlainButton aria-label="함수 삽입"><Fx>f<small>x</small></Fx></PlainButton>
    </FormulaButtons>
    <FormulaInput aria-label="수식 입력줄" defaultValue="=VLOOKUP(G3,B3:C21,2)" />
  </FormulaBar>
);

const AppSheet = () => (
  <Sheet>
    <Grid>
      <colgroup>
        {widths.map((w, i) => <col key={i} width={w} />)}
        <col />
      </colgroup>
      <thead>
        <tr>
          <Corner><Svg w={25} h={25}><path d="M25 0v25H0z" fill="#b3b3b3" /></Svg></Corner>
          {columns.map((c) => <ColHead key={c} scope="col" $on={c === 'H'}>{c}</ColHead>)}
          <ColHead />
        </tr>
      </thead>
      <tbody>
        <Row $h={52}>
          <RowHead scope="row">1</RowHead>
          <Banner colSpan={4} $bg="#ffff00">원본 값</Banner>
          <GapCell />
          <Banner colSpan={4} $bg="#bdd7ee">VLOOKUP 사용</Banner>
          <GapCell colSpan={9} />
        </Row>
        <Row $h={35}>
          <RowHead scope="row">2</RowHead>
          {headings.map((h) => <Cell key={h} $text>{h}</Cell>)}
          <GapCell $edge />
          {headings.map((h) => <Cell key={h} $text>{h}</Cell>)}
          <GapCell colSpan={9} />
        </Row>
        {names.map((name, i) => (
          <Row key={name} $h={i % 2 ? 35 : 34}>
            <RowHead scope="row" $on={i === 0}>{i + 3}</RowHead>
            <Cell>{i + 1}</Cell>
            <Cell $number>{202301 + i}</Cell>
            <Cell $text>{name}</Cell>
            <Cell />
            <GapCell $edge />
            <Cell>{i + 1}</Cell>
            <Cell $number>{lookups[i]}</Cell>
            {i === 0 ? <EditingCell><EditingText>G3,B3:C21,2)</EditingText></EditingCell> : <Cell />}
            <Cell />
            <GapCell colSpan={9} />
          </Row>
        ))}
        <Row $h={29}>
          <RowHead scope="row">22</RowHead>
          <GapCell colSpan={18} />
        </Row>
      </tbody>
    </Grid>
    <HeaderMarks>
      {[1, 2, 3].map((n) => <HeaderMark key={n}><MarkNumber>{n}</MarkNumber></HeaderMark>)}
    </HeaderMarks>
  </Sheet>
);

const ArgumentsDialog = () => (
  <Dialog role="dialog" aria-labelledby="dialog-title">
    <DialogTitle>
      <h2 id="dialog-title">함수 인수</h2>
      <HelpMark aria-label="도움말">?</HelpMark>
      <PlainButton aria-label="닫기"><Svg w={14} h={14}><path d="M1 1l12 12M13 1L1 13" stroke="#444" /></Svg></PlainButton>
    </DialogTitle>
    <DialogBody>
      <ArgBox>
        <legend>VLOOKUP</legend>
        <ArgFields>
          {args.map((a) => (
            <ArgRow key={a.id}>
              <label htmlFor={a.id}>{a.id}</label>
              <ArgField>
                <input id={a.id} defaultValue={a.value} />
                <RefButton aria-label={`${a.id} 범위 선택`}><RefIcon /></RefButton>
              </ArgField>
              <Equals>=</Equals>
              <ArgValue htmlFor={a.id} $faint={a.faint}>{a.result}</ArgValue>
            </ArgRow>
          ))}
        </ArgFields>
      </ArgBox>
      <ResultRow><Equals>=</Equals><ArgValue>"박영이"</ArgValue></ResultRow>
      <Text>배열의 첫 열에서 값을 검색하여, 지정한 열의 같은 행에서 데이터를 돌려줍니다. 기본적으로<br />오름차순으로 표가 정렬됩니다.</Text>
      <ArgHelp>
        <b>Col_index_num</b>
        <Text>은(는) <small>table_array</small> 내의 열 번호로, 값을 추출할 열을<br />지정합니다. 표의 첫 열 값은 열 1입니다.</Text>
      </ArgHelp>
      <Result><span>수식 결과=</span><output>박영이</output></Result>
      <DialogFoot>
        <a href="#help">도움말(H)</a>
        <DialogButton $primary>확인</DialogButton>
        <DialogButton>취소</DialogButton>
      </DialogFoot>
    </DialogBody>
    <RedBox />
    <Step><span>6</span></Step>
  </Dialog>
);

export default function App() {
  return (
    <Page>
      <Global />
      <Frame>
        <AppHeader />
        <AppRibbon />
        <AppFormulaBar />
        <AppSheet />
        <ArgumentsDialog />
      </Frame>
    </Page>
  );
}
